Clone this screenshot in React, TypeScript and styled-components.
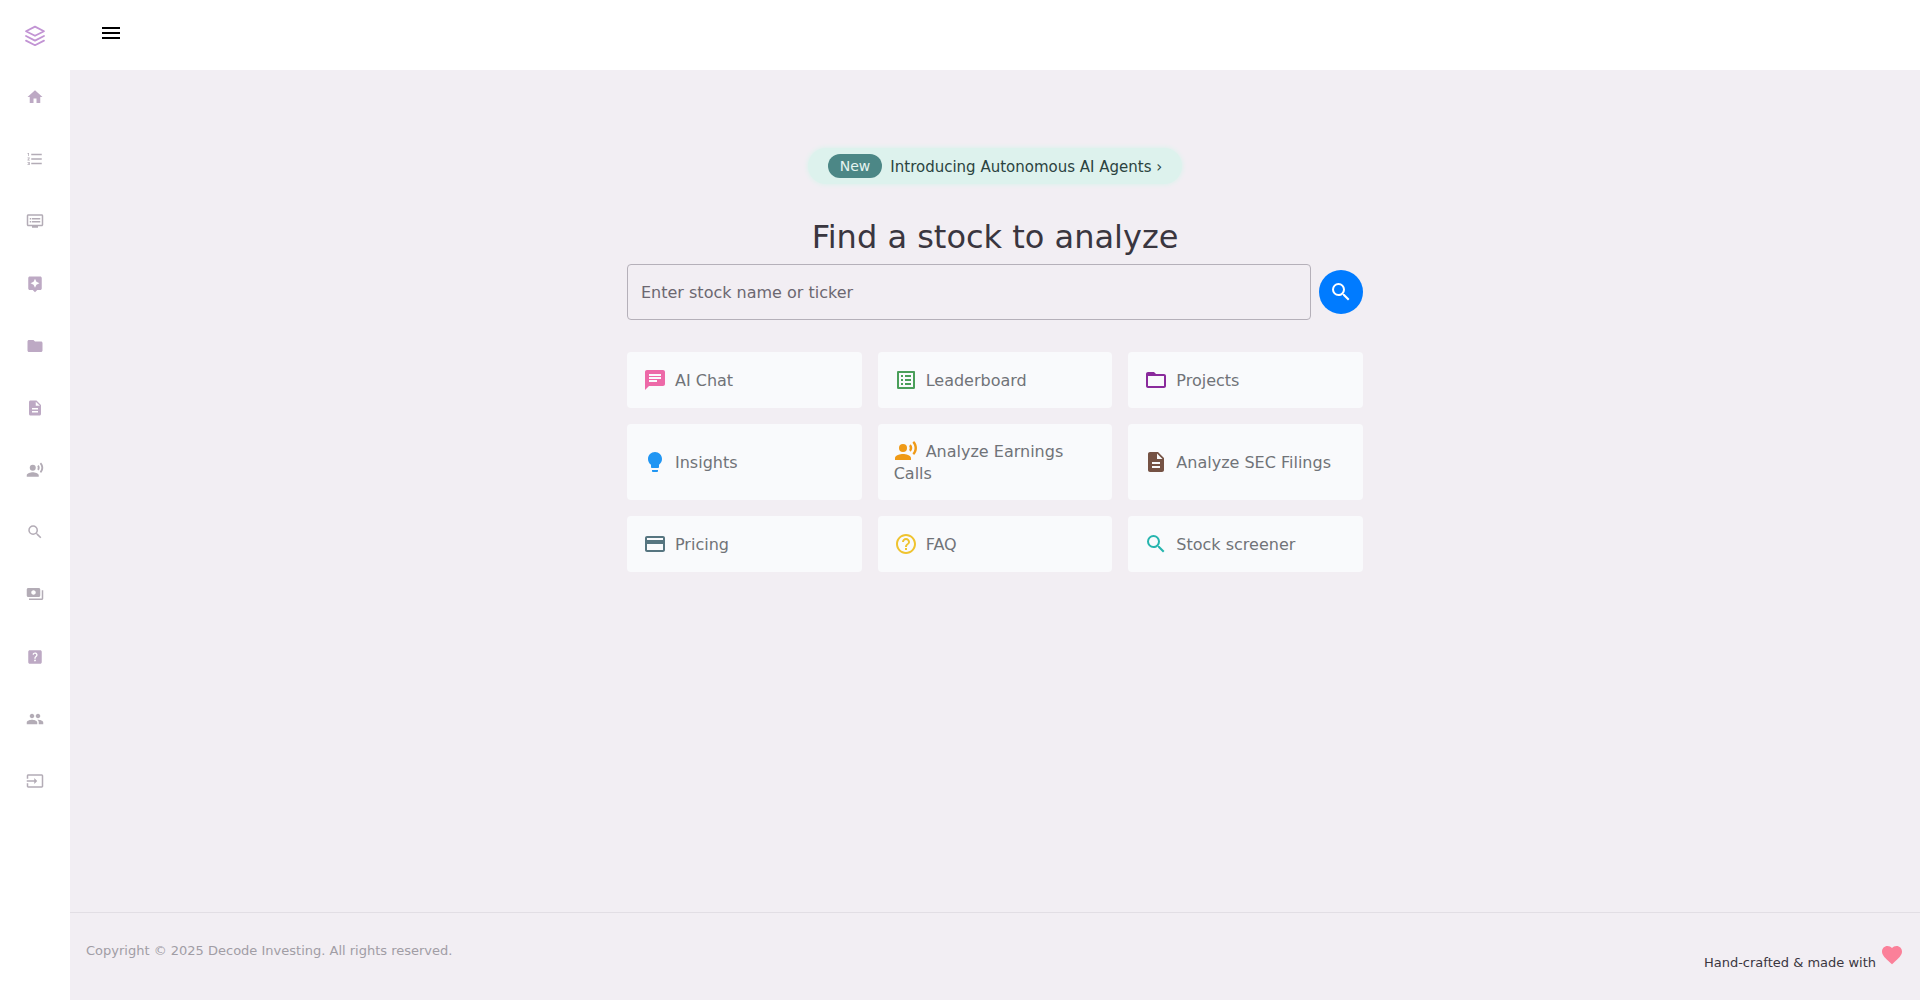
import React from "react";
import styled, { createGlobalStyle } from "styled-components";
import type { IconType } from "react-icons";
import {
  MdAssistant,
  MdChat,
  MdCreditCard,
  MdDescription,
  MdDvr,
  MdFavorite,
  MdFolder,
  MdFolderOpen,
  MdFormatListNumbered,
  MdHelpCenter,
  MdHelpOutline,
  MdHome,
  MdInput,
  MdLightbulb,
  MdListAlt,
  MdMenu,
  MdPayments,
  MdPeople,
  MdRecordVoiceOver,
  MdSearch,
} from "react-icons/md";

const GlobalStyle = createGlobalStyle`
  *, *::before, *::after { box-sizing: border-box; }
  body {
    margin: 0;
    background: #f2eef3;
    color: #3a363f;
    font-family: "DejaVu Sans", sans-serif;
    font-size: 16px;
    line-height: 22px;
  }
  a { color: inherit; text-decoration: none; }
`;

const Shell = styled.div`
  display: flex;
  min-height: 100vh;
`;

const Sidebar = styled.nav`
  flex: 0 0 70px;
  background: #fff;
`;

const Logo = styled.a`
  display: flex;
  align-items: center;
  justify-content: center;
  height: 66px;
  padding-top: 6px;
`;

const NavList = styled.ul`
  display: grid;
  grid-auto-rows: 1fr;
  height: 746px;
  margin: 0;
  padding: 0;
  list-style: none;
`;

const NavLink = styled.a<{ $tinted?: boolean }>`
  display: flex;
  align-items: center;
  justify-content: center;
  height: 100%;
  font-size: 18px;
  color: ${(p) => (p.$tinted ? "#bda9c4" : "#b3acb6")};
`;

const Column = styled.div`
  flex: 1;
  min-width: 0;
  display: flex;
  flex-direction: column;
`;

const TopBar = styled.header`
  height: 70px;
  padding: 21px 29px;
  background: #fff;
`;

const MenuButton = styled.button`
  display: flex;
  padding: 0;
  border: 0;
  background: none;
  color: #000;
  font-size: 24px;
  cursor: pointer;
`;

const Main = styled.main`
  flex: 1;
  display: flex;
  flex-direction: column;
  align-items: center;
  padding: 78px 16px 32px;
`;

const Banner = styled.a`
  display: flex;
  align-items: center;
  gap: 8px;
  height: 36px;
  padding: 0 20px;
  border-radius: 18px;
  background: #ddf2ed;
  box-shadow: 0 0 4px 1px #ddf2ed;
  color: #2b433f;
  font-size: 15px;
`;

const BannerText = styled.span`
  padding-top: 2px;
`;

const Badge = styled.span`
  padding: 0 12px;
  border-radius: 12px;
  background: #4c8786;
  color: #e6f4f1;
  font-size: 14px;
  line-height: 24px;
`;

const Title = styled.h1`
  margin: 33px 0 7px;
  font-size: 32px;
  font-weight: 400;
  line-height: 40px;
`;

const SearchForm = styled.form`
  display: flex;
  align-items: center;
  gap: 8px;
  width: 100%;
  max-width: 736px;
`;

const SearchInput = styled.input`
  flex: 1;
  min-width: 0;
  height: 56px;
  padding: 0 13px;
  border: 1px solid #b5b0b9;
  border-radius: 4px;
  background: transparent;
  color: #3a363f;
  font: inherit;
  &::placeholder { color: #6c6770; opacity: 1; }
`;

const SearchButton = styled.button`
  display: grid;
  place-items: center;
  width: 44px;
  height: 44px;
  padding: 0;
  border: 0;
  border-radius: 50%;
  background: #007bff;
  color: #fff;
  font-size: 24px;
  cursor: pointer;
`;

const CardGrid = styled.div`
  display: grid;
  grid-template-columns: repeat(3, 1fr);
  gap: 16px;
  width: 100%;
  max-width: 736px;
  margin-top: 32px;
`;

const Card = styled.a`
  display: flex;
  align-items: center;
  min-height: 56px;
  padding: 15px 16px;
  border-radius: 4px;
  background: #f9fafc;
  color: #707378;
`;

const CardIcon = styled.span<{ $color: string }>`
  display: inline-block;
  margin-right: 8px;
  vertical-align: bottom;
  color: ${(p) => p.$color};
  font-size: 24px;
  svg { display: block; }
`;

const Footer = styled.footer`
  display: flex;
  justify-content: space-between;
  height: 88px;
  padding: 27px 16px;
  border-top: 1px solid #e2dee4;
  font-size: 13px;
`;

const Copyright = styled.span`
  color: #a19da5;
`;

const Crafted = styled.span`
  display: flex;
  align-items: flex-end;
  align-self: flex-start;
  gap: 4px;
  height: 34px;
`;

const Heart = styled(MdFavorite)`
  align-self: flex-start;
  margin-top: 3px;
  color: #fb8099;
  font-size: 24px;
`;

interface NavItem {
  label: string;
  icon: IconType;
  tinted?: boolean;
}

const navItems: NavItem[] = [
  { label: "Home", icon: MdHome, tinted: true },
  { label: "Leaderboard", icon: MdFormatListNumbered },
  { label: "Watchlist", icon: MdDvr },
  { label: "Insights", icon: MdAssistant, tinted: true },
  { label: "Projects", icon: MdFolder, tinted: true },
  { label: "SEC filings", icon: MdDescription, tinted: true },
  { label: "Earnings calls", icon: MdRecordVoiceOver },
  { label: "Stock screener", icon: MdSearch },
  { label: "Pricing", icon: MdPayments },
  { label: "FAQ", icon: MdHelpCenter, tinted: true },
  { label: "Community", icon: MdPeople },
  { label: "Sign in", icon: MdInput },
];

const cards: { label: string; icon: IconType; color: string }[] = [
  { label: "AI Chat", icon: MdChat, color: "#ed69a8" },
  { label: "Leaderboard", icon: MdListAlt, color: "#4a9f5a" },
  { label: "Projects", icon: MdFolderOpen, color: "#8a2a9c" },
  { label: "Insights", icon: MdLightbulb, color: "#2196f3" },
  { label: "Analyze Earnings Calls", icon: MdRecordVoiceOver, color: "#ef9a17" },
  { label: "Analyze SEC Filings", icon: MdDescription, color: "#755244" },
  { label: "Pricing", icon: MdCreditCard, color: "#567580" },
  { label: "FAQ", icon: MdHelpOutline, color: "#efc32f" },
  { label: "Stock screener", icon: MdSearch, color: "#26b5ae" },
];

function LayersLogo() {
  return (
    <svg width="22" height="22" viewBox="0 0 22 22" fill="none" stroke="#c294d4" strokeWidth="1.8" strokeLinejoin="round" strokeLinecap="round" aria-hidden="true">
      <path d="M11 1.6 20 6.2 11 10.8 2 6.2Z" />
      <path d="M2 11 11 15.6 20 11" />
      <path d="M2 15.6 11 20.2 20 15.6" />
    </svg>
  );
}

export default function App() {
  return (
    <>
      <GlobalStyle />
      <Shell>
        <Sidebar aria-label="Main">
          <Logo href="#" aria-label="Decode Investing">
            <LayersLogo />
          </Logo>
          <NavList>
            {navItems.map(({ label, icon: Icon, tinted }) => (
              <li key={label}>
                <NavLink href="#" aria-label={label} $tinted={tinted}>
                  <Icon />
                </NavLink>
              </li>
            ))}
          </NavList>
        </Sidebar>
        <Column>
          <TopBar>
            <MenuButton type="button" aria-label="Toggle menu">
              <MdMenu />
            </MenuButton>
          </TopBar>
          <Main>
            <Banner href="#">
              <Badge>New</Badge>
              <BannerText>Introducing Autonomous AI Agents ›</BannerText>
            </Banner>
            <Title>Find a stock to analyze</Title>
            <SearchForm onSubmit={(e: React.FormEvent) => e.preventDefault()}>
              <SearchInput type="text" aria-label="Enter stock name or ticker" placeholder="Enter stock name or ticker" />
              <SearchButton type="submit" aria-label="Search">
                <MdSearch />
              </SearchButton>
            </SearchForm>
            <CardGrid>
              {cards.map(({ label, icon: Icon, color }) => (
                <Card href="#" key={label}>
                  <span>
                    <CardIcon $color={color}>
                      <Icon />
                    </CardIcon>
                    {label}
                  </span>
                </Card>
              ))}
            </CardGrid>
          </Main>
          <Footer>
            <Copyright>Copyright © 2025 Decode Investing. All rights reserved.</Copyright>
            <Crafted>
              Hand-crafted &amp; made with
              <Heart />
            </Crafted>
          </Footer>
        </Column>
      </Shell>
    </>
  );
}
